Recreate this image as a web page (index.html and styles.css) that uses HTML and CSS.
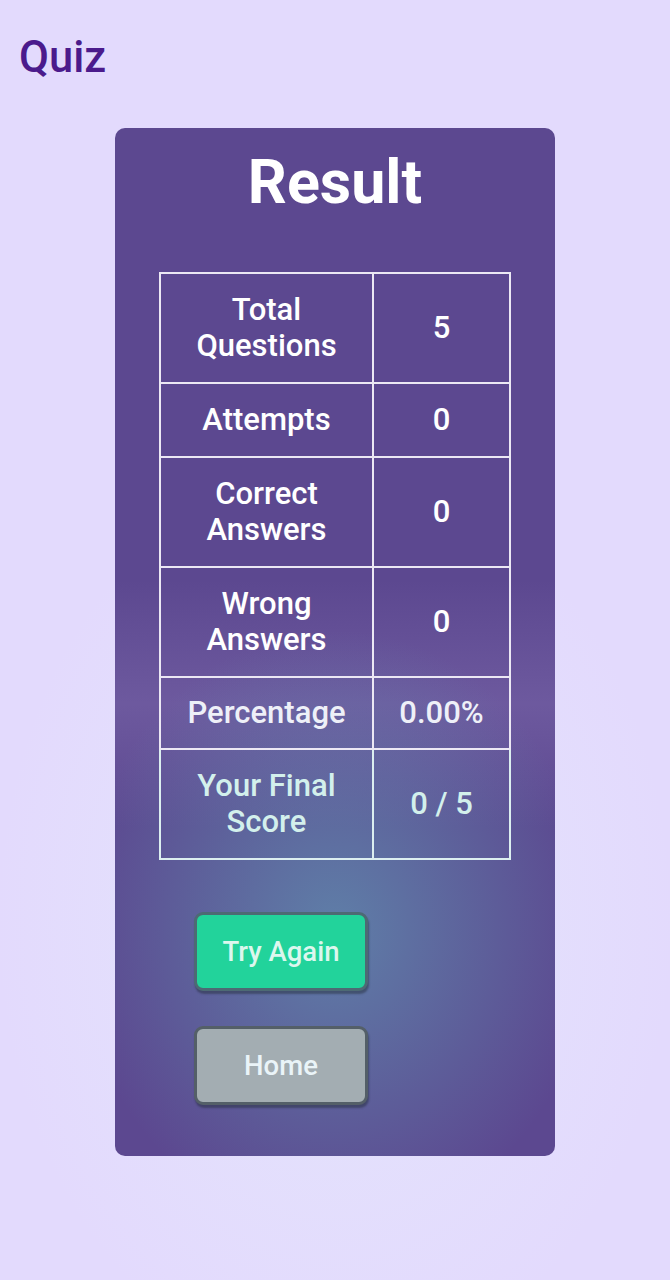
FILE: index.html
```html
<!DOCTYPE html>
<html lang="en">
<head>
<meta charset="utf-8">
<title>Quiz</title>
<link rel="stylesheet" href="styles.css">
</head>
<body>
<header class="topbar">
  <h1 class="brand">Quiz</h1>
</header>
<main class="page">
  <section class="card">
    <h2 class="card-title">Result</h2>
    <table class="result-table">
      <tbody>
        <tr class="tall"><td>Total Questions</td><td>5</td></tr>
        <tr><td>Attempts</td><td>0</td></tr>
        <tr class="tall"><td>Correct Answers</td><td>0</td></tr>
        <tr class="tall"><td>Wrong Answers</td><td>0</td></tr>
        <tr class="lite"><td>Percentage</td><td>0.00%</td></tr>
        <tr class="tall mint"><td>Your Final Score</td><td>0 / 5</td></tr>
      </tbody>
    </table>
    <div class="actions">
      <button class="btn btn-try">Try Again</button>
      <button class="btn btn-home">Home</button>
    </div>
  </section>
</main>
</body>
</html>
```

FILE: styles.css
```css
* { box-sizing: border-box; }
html, body { margin: 0; padding: 0; }
body {
  min-height: 1280px;
  font-family: Roboto, "Noto Sans", sans-serif;
  background:
    radial-gradient(ellipse 340px 460px at 50% 72%, rgba(228,230,252,0.9), rgba(226,222,252,0) 100%),
    #e3dafd;
}
.topbar {
  padding: 32px 19px 0;
}
.brand {
  margin: 0;
  font-size: 43.5px;
  line-height: 52px;
  font-weight: 500;
  color: #4b1a8c;
}
.page {
  display: flex;
  justify-content: center;
  padding-top: 44px;
}
.card {
  width: 440px;
  height: 1028px;
  border-radius: 10px;
  background:
    radial-gradient(ellipse 260px 300px at 50% 78%, rgba(96,150,178,0.7), rgba(96,150,178,0) 100%),
    linear-gradient(180deg, rgba(255,255,255,0) 0%, rgba(255,255,255,0) 44%, rgba(170,150,210,0.22) 56%, rgba(255,255,255,0) 68%),
    #5c4890;
  padding: 20px 44px 0;
  display: flex;
  flex-direction: column;
}
.card-title {
  margin: 0;
  text-align: center;
  font-size: 61px;
  line-height: 68px;
  font-weight: 700;
  color: #ffffff;
}
.result-table {
  margin-top: 56px;
  width: 352px;
  border-collapse: collapse;
  border: 2px solid #ece8f4;
}
.result-table td {
  border: 2px solid #ece8f4;
  text-align: center;
  font-size: 31px;
  line-height: 36px;
  font-weight: 500;
  color: #ffffff;
  padding: 0 12px;
  height: 74px;
}
.result-table td:first-child { width: 213px; }
.result-table tr.tall td { height: 110px; }
.result-table tr.lite td { color: #eef0f8; height: 72px; }
.result-table tr.mint td { color: #d3f0ec; border-color: #dceff0; }
.actions {
  display: flex;
  flex-direction: column;
  align-items: flex-start;
  gap: 35px;
  margin-top: 52px;
  padding-left: 35px;
}
.btn {
  width: 174px;
  height: 79px;
  border-radius: 9px;
  border: 3px solid #4e5f6c;
  box-shadow: 1px 3px 2px rgba(30,40,50,0.45);
  font-family: Roboto, "Noto Sans", sans-serif;
  font-size: 27.5px;
  font-weight: 500;
  cursor: pointer;
}
.btn-try {
  background: #22d39b;
  color: #dcf7ee;
  border-color: #4d6a74;
}
.btn-home {
  background: #a3adb2;
  color: #eaf4f8;
  border-color: #545f68;
}
```
